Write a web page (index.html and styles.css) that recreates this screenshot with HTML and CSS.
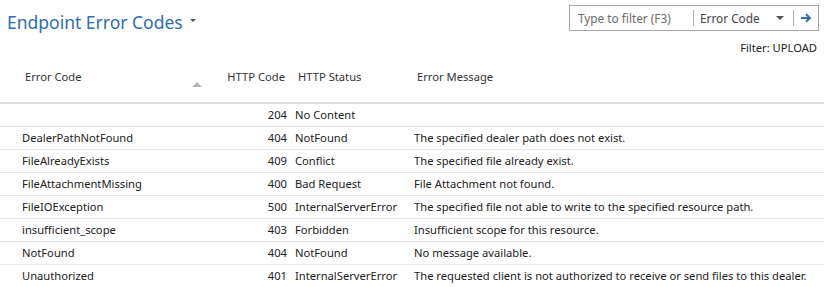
FILE: index.html
```html
<!DOCTYPE html>
<html>
<head>
<meta charset="utf-8">
<link rel="stylesheet" href="styles.css">
</head>
<body>
<div class="page">
  <div class="topbar">
    <div class="title">Endpoint Error Codes <span class="caret"></span></div>
    <div class="filterbox">
      <span class="filter-input">Type to filter (F3)</span>
      <span class="filter-field">Error Code <span class="dd"></span></span>
      <span class="filter-go">
        <svg width="12" height="10" viewBox="0 0 12 10"><path d="M1 5h9M6 1.2l4 3.8-4 3.8" fill="none" stroke="#2f6db5" stroke-width="2"/></svg>
      </span>
    </div>
  </div>
  <div class="filterline">Filter: UPLOAD</div>
  <table class="grid">
    <colgroup><col class="c1"><col class="c2"><col class="c3"><col class="c4"></colgroup>
    <thead>
      <tr>
        <th class="h1">Error Code<span class="sort"></span></th>
        <th class="h2">HTTP Code</th>
        <th class="h3">HTTP Status</th>
        <th class="h4">Error Message</th>
      </tr>
    </thead>
    <tbody>
      <tr><td></td><td class="num">204</td><td>No Content</td><td></td></tr>
      <tr><td>DealerPathNotFound</td><td class="num">404</td><td>NotFound</td><td>The specified dealer path does not exist.</td></tr>
      <tr><td>FileAlreadyExists</td><td class="num">409</td><td>Conflict</td><td>The specified file already exist.</td></tr>
      <tr><td>FileAttachmentMissing</td><td class="num">400</td><td>Bad Request</td><td>File Attachment not found.</td></tr>
      <tr><td>FileIOException</td><td class="num">500</td><td>InternalServerError</td><td>The specified file not able to write to the specified resource path.</td></tr>
      <tr><td>insufficient_scope</td><td class="num">403</td><td>Forbidden</td><td>Insufficient scope for this resource.</td></tr>
      <tr><td>NotFound</td><td class="num">404</td><td>NotFound</td><td>No message available.</td></tr>
      <tr><td>Unauthorized</td><td class="num">401</td><td>InternalServerError</td><td>The requested client is not authorized to receive or send files to this dealer.</td></tr>
    </tbody>
  </table>
</div>
</body>
</html>
```
FILE: styles.css
```css
html, body { margin: 0; padding: 0; background: #fff; }
body { font-family: "Noto Sans", "Open Sans", sans-serif; font-size: 11.2px; color: #212121; }
.page { width: 824px; height: 287px; overflow: hidden; }
.topbar { display: flex; justify-content: space-between; align-items: flex-start; padding: 5px 5px 0 7px; height: 26px; }
.title { font-size: 17.5px; color: #2f6db5; line-height: 30px; margin-top: 2px; display: flex; align-items: center; }
.caret { display: inline-block; width: 0; height: 0; border-left: 3px solid transparent; border-right: 3px solid transparent; border-top: 3px solid #555; margin-left: 7px; margin-top: -4px; }
.filterbox { display: flex; align-items: center; width: 248px; height: 24px; border: 1px solid #a6a6a6; color: #555; background: #fff; font-size: 11.8px; }
.filter-input { width: 115px; padding-left: 8px; color: #6b6b6b; border-right: 1px solid #b0b0b0; height: 16px; line-height: 16px; }
.filter-field { flex: 1; display: flex; align-items: center; justify-content: space-between; padding: 0 9px 0 6px; color: #444; border-right: 1px solid #b0b0b0; height: 16px; line-height: 16px; }
.dd { width: 0; height: 0; border-left: 4px solid transparent; border-right: 4px solid transparent; border-top: 4px solid #555; }
.filter-go { width: 24px; display: flex; justify-content: center; align-items: center; }
.filterline { text-align: right; padding-right: 7px; margin-top: 9px; line-height: 16px; height: 17px; color: #212121; }
.grid { border-collapse: collapse; table-layout: fixed; width: 824px; margin-top: 0; }
.c1 { width: 210px; } .c2 { width: 80px; } .c3 { width: 119px; }
.grid th { font-weight: normal; text-align: left; height: 46px; padding: 0 0 7px 0; vertical-align: middle; border-bottom: 2px solid #dcdcdc; color: #333; box-sizing: border-box; }
.grid th.h1 { padding-left: 25px; position: relative; }
.grid th.h2 { text-align: right; padding-right: 5px; }
.grid th.h3 { padding-left: 8px; }
.grid th.h4 { padding-left: 8px; }
.sort { position: absolute; right: 8px; top: 25px; width: 0; height: 0; border-left: 5px solid transparent; border-right: 5px solid transparent; border-bottom: 5px solid #b5b5b5; }
.grid td { height: 22px; padding: 0; border-bottom: 1px solid #e8e8e8; white-space: nowrap; overflow: hidden; line-height: 22px; }
.grid td:first-child { padding-left: 22px; }
.grid td.num { text-align: right; padding-right: 3px; }
.grid td:nth-child(3) { padding-left: 5px; }
.grid td:nth-child(4) { padding-left: 5px; }
```
